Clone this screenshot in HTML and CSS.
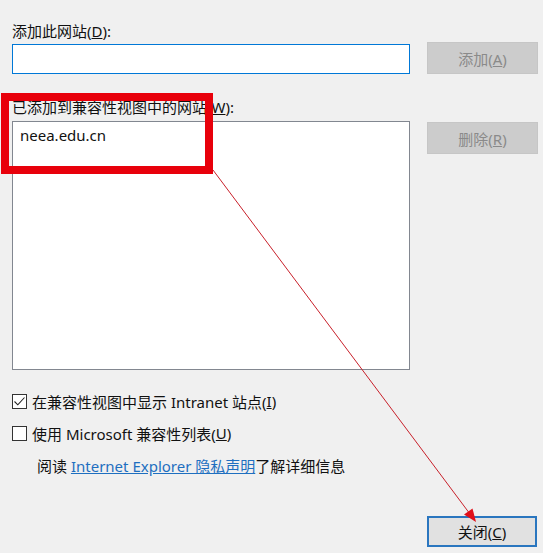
FILE: index.html
```html
<!DOCTYPE html>
<html lang="zh-CN">

<head>
    <meta charset="UTF-8">
    <meta name="viewport" content="width=device-width, initial-scale=1.0">
    <title>兼容性视图设置</title>
    <link rel="stylesheet" href="styles.css">
</head>

<body>

    <div class="dialog">
        <div class="field-label">添加此网站(<u>D</u>):</div>
        <div class="row">
            <input class="site-input" type="text">
            <button class="btn" disabled>添加(<u>A</u>)</button>
        </div>

        <div class="field-label list-label">已添加到兼容性视图中的网站(<u>W</u>):</div>
        <div class="row">
            <div class="site-list">
                <div class="site-item">neea.edu.cn</div>
            </div>
            <button class="btn btn-delete" disabled>删除(<u>R</u>)</button>
        </div>

        <!-- Options -->
        <div class="options">
            <label class="option">
                <span class="check checked">
                    <svg width="13" height="13" viewBox="0 0 13 13">
                        <path d="M1.5 6.5 L4.8 9.8 L11.5 2.5" fill="none" stroke="#222" stroke-width="1.1" />
                    </svg>
                </span>
                在兼容性视图中显示 Intranet 站点(<u>I</u>)
            </label>
            <label class="option">
                <span class="check"></span>
                使用 Microsoft 兼容性列表(<u>U</u>)
            </label>
            <div class="option info">
                阅读&nbsp;<a href="#" class="link">Internet Explorer 隐私声明</a>了解详细信息
            </div>
        </div>

        <div class="footer">
            <button class="btn btn-close">关闭(<u>C</u>)</button>
        </div>
    </div>

    <!-- Annotation drawn over the dialog -->
    <svg class="annotation" width="543" height="553" viewBox="0 0 543 553">
        <rect x="5" y="97" width="204" height="73" fill="none" stroke="#e8000b" stroke-width="8" />
        <line x1="213" y1="170" x2="470" y2="514" stroke="#c8202a" stroke-width="1" />
        <polygon points="476,522 464,514.5 472.5,508.5" fill="#e0101a" />
    </svg>

</body>

</html>
```

FILE: styles.css
```css
body {
    margin: 0;
    background: #f0f0f0;
    font-family: 'Noto Sans', 'Noto Sans CJK SC', sans-serif;
    font-size: 15px;
    color: #111;
    position: relative;
    height: 553px;
    overflow: hidden;
}

.dialog {
    padding: 21px 5px 0 12px;
}

.field-label {
    line-height: 20px;
    height: 20px;
}

.list-label {
    margin-top: 23px;
}

.row {
    display: flex;
    align-items: flex-start;
    gap: 17px;
    margin-top: 1px;
}

.list-label + .row {
    margin-top: 4px;
}

/* Text box */
.site-input {
    width: 398px;
    height: 30px;
    box-sizing: border-box;
    margin: 2px 0 0 0;
    border: 1px solid #0078d7;
    background: #fff;
    outline: none;
}

/* List box */
.site-list {
    width: 398px;
    height: 249px;
    box-sizing: border-box;
    border: 1px solid #828790;
    background: #fff;
    padding: 3px 7px;
}

.site-item {
    line-height: 20px;
    color: #111;
}

/* Buttons */
.btn {
    width: 111px;
    height: 32px;
    box-sizing: border-box;
    border: 1px solid #c6c6c6;
    background: #cccccc;
    color: #8a8a8a;
    font-family: inherit;
    font-size: 15px;
    padding: 0;
}

.btn-delete {
    margin-top: 1px;
}

.btn-close {
    width: 110px;
    height: 31px;
    border: 2px solid #2a76bf;
    background: #e1e1e1;
    color: #111;
    cursor: pointer;
}

/* Checkboxes */
.options {
    margin-top: 15px;
}

.option {
    display: flex;
    align-items: center;
    height: 32px;
}

.check {
    width: 15px;
    height: 15px;
    box-sizing: border-box;
    border: 1px solid #333;
    background: #fff;
    margin-right: 5px;
    display: flex;
    justify-content: center;
    align-items: center;
}

.info {
    padding-left: 25px;
}

.link {
    color: #1e6fc0;
    text-decoration: underline;
}

.footer {
    display: flex;
    justify-content: flex-end;
    margin-top: 35px;
    padding-right: 1px;
}

.annotation {
    position: absolute;
    left: 0;
    top: 0;
    pointer-events: none;
}
```
